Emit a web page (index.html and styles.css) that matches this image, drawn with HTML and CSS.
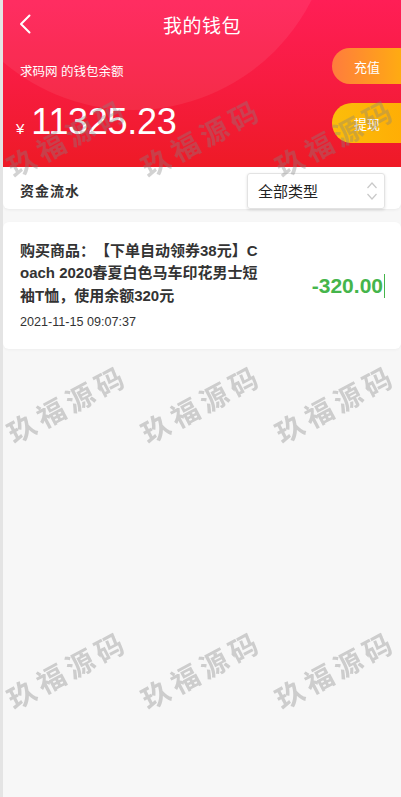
FILE: index.html
```html
<!DOCTYPE html>
<html lang="zh">
<head>
<meta charset="utf-8">
<title>我的钱包</title>
<link rel="stylesheet" href="styles.css">
</head>
<body>
<div class="page">
  <header class="header">
    <div class="nav">
      <svg class="back" width="12" height="20" viewBox="0 0 12 20"><polyline points="10.5,1.5 2,10 10.5,18.5" fill="none" stroke="#fff" stroke-width="2" stroke-linecap="round" stroke-linejoin="round"/></svg>
      <h1 class="title">我的钱包</h1>
    </div>
    <div class="summary">
      <div class="summary-left">
        <div class="label">求码网 的钱包余额</div>
        <div class="balance"><span class="currency">¥</span><span class="amount">11325.23</span></div>
      </div>
      <div class="actions">
        <div class="pill pill-recharge">充值</div>
        <div class="pill pill-withdraw">提现</div>
      </div>
    </div>
  </header>

  <div class="filter">
    <span class="filter-label">资金流水</span>
    <div class="select">
      <span>全部类型</span>
      <svg width="12" height="24" viewBox="0 0 12 24"><polyline points="1.5,9 6,4 10.5,9" fill="none" stroke="#c9c9c9" stroke-width="1.2"/><polyline points="1.5,15 6,20 10.5,15" fill="none" stroke="#c9c9c9" stroke-width="1.2"/></svg>
    </div>
  </div>

  <div class="record">
    <div class="record-info">
      <div class="record-title">购买商品：【下单自动领券38元】Coach 2020春夏白色马车印花男士短袖T恤，使用余额320元</div>
      <div class="record-time">2021-11-15 09:07:37</div>
    </div>
    <div class="record-amount"><span class="caret">-320.00</span></div>
  </div>
</div>

<div class="watermarks">
  <span>玖福源码</span><span>玖福源码</span><span>玖福源码</span>
  <span>玖福源码</span><span>玖福源码</span><span>玖福源码</span>
  <span>玖福源码</span><span>玖福源码</span><span>玖福源码</span>
</div>
</body>
</html>
```

FILE: styles.css
```css
* { box-sizing: border-box; }
html, body { margin: 0; padding: 0; }
body {
  background: #f7f7f7;
  font-family: "Liberation Sans", "Noto Sans CJK SC", sans-serif;
  color: #333;
  min-height: 797px;
  border-left: 3px solid #e4e4e4;
  overflow: hidden;
  text-spacing-trim: space-all;
}
.page { min-height: 797px; }

.header {
  position: relative;
  height: 167px;
  background: linear-gradient(180deg, #ff1e56 0%, #f71c40 50%, #ee1a26 100%);
  overflow: hidden;
  color: #fff;
}
.header::before {
  content: "";
  position: absolute;
  left: -70px;
  top: -290px;
  width: 400px;
  height: 400px;
  border-radius: 50%;
  background: rgba(255, 255, 255, 0.07);
}
.nav {
  position: relative;
  height: 48px;
  display: flex;
  align-items: center;
  justify-content: center;
}
.back {
  position: absolute;
  left: 16px;
  top: 14px;
}
.title {
  margin: 0;
  font-size: 19px;
  font-weight: normal;
  line-height: 54px;
  margin-top: 6px;
  letter-spacing: 0.5px;
}
.summary {
  position: relative;
  display: flex;
  justify-content: space-between;
}
.summary-left { padding-left: 17px; }
.label {
  font-size: 12.5px;
  line-height: 16px;
  margin-top: 16px;
}
.balance {
  display: flex;
  align-items: baseline;
  margin-top: 22px;
}
.currency { font-size: 15px; margin-left: -4px; margin-right: 7px; }
.amount { font-size: 36px; line-height: 40px; letter-spacing: -0.3px; }

.actions {
  display: flex;
  flex-direction: column;
  gap: 19px;
  width: 69px;
}
.pill {
  height: 36px;
  border-radius: 18px 0 0 18px;
  display: flex;
  align-items: center;
  padding-left: 22px;
  font-size: 13px;
  color: #fff;
}
.pill-recharge { background: linear-gradient(90deg, #ff7c3d, #ffab12); }
.pill-withdraw { height: 40px; border-radius: 20px 0 0 20px; background: linear-gradient(90deg, #fbbd0a, #ffae05); }

.filter {
  height: 42px;
  background: #fff;
  border-radius: 0 0 6px 6px;
  box-shadow: 0 1px 3px rgba(0, 0, 0, 0.06);
  display: flex;
  align-items: center;
  justify-content: space-between;
  padding: 0 16px 0 17px;
}
.filter-label { font-size: 14px; color: #333; font-weight: bold; letter-spacing: 1px; margin-top: 4px; }
.select {
  width: 138px;
  height: 36px;
  margin-top: 5px;
  border: 1px solid #e3e3e3;
  border-radius: 3px;
  box-shadow: 0 1px 3px rgba(0, 0, 0, 0.12);
  display: flex;
  align-items: center;
  justify-content: space-between;
  padding: 0 6px 0 10px;
  font-size: 15px;
  color: #222;
}

.record {
  margin-top: 13px;
  height: 127px;
  background: #fff;
  border-radius: 6px;
  box-shadow: 0 1px 3px rgba(0, 0, 0, 0.04);
  display: flex;
  align-items: center;
  justify-content: space-between;
  padding: 0 16px 0 17px;
}
.record-title {
  width: 242px;
  font-size: 15px;
  line-height: 22.5px;
  font-weight: bold;
  color: #333;
  word-break: break-all;
}
.record-time {
  margin-top: 6px;
  font-size: 12.6px;
  line-height: 18px;
  color: #333;
}
.record-amount {
  font-size: 21px;
  font-weight: bold;
  color: #45b54b;
}
.caret {
  display: inline-block;
  line-height: 24px;
  padding-right: 1px;
  border-right: 1px solid #45b54b;
}

.watermarks {
  position: fixed;
  left: 0;
  top: 4px;
  display: grid;
  grid-template-columns: repeat(3, 134px);
  grid-auto-rows: 266px;
  pointer-events: none;
  z-index: 10;
}
.watermarks span {
  display: flex;
  align-items: center;
  justify-content: center;
  font-family: "Noto Sans CJK SC", sans-serif;
  font-weight: bold;
  font-size: 28px;
  letter-spacing: 5px;
  color: rgba(130, 130, 130, 0.36);
  transform: rotate(-28deg);
  white-space: nowrap;
}
```
